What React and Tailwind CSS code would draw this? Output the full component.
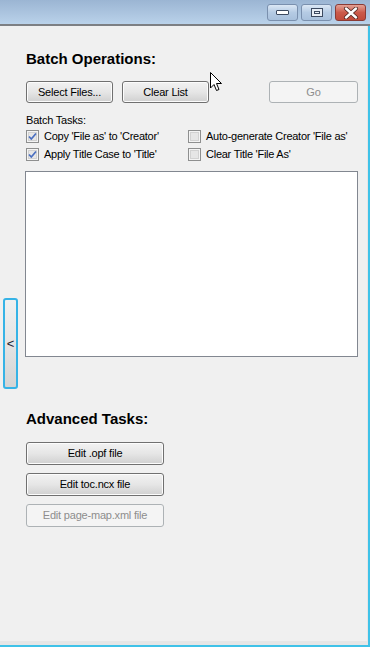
const font = { fontFamily: '"Liberation Sans", Arial, sans-serif' };

const WinButton = ({ children, disabled, className = "" }) => (
  <button
    className={`h-[22px] rounded-[3px] border text-[11px] tracking-[-0.2px] ${
      disabled
        ? "border-[#adb2b5] bg-[#f4f4f4] text-[#8d8d8d]"
        : "border-[#707070] bg-gradient-to-b from-[#f2f2f2] via-[#e6e6e6] to-[#d0d0d0] text-black shadow-[inset_0_0_0_1px_#fcfcfc]"
    } ${className}`}
  >
    {children}
  </button>
);

const CheckBox = ({ checked, label }) => (
  <div className="flex h-[18px] items-center gap-[5px]">
    <svg width="13" height="13" viewBox="0 0 13 13">
      <rect x="0.5" y="0.5" width="12" height="12" fill="#f4f4f4" stroke="#8e8f8f" />
      <rect x="2.5" y="2.5" width="8" height="8" fill="#e6e6e6" stroke="#d2d2d2" />
      {checked && (
        <path d="M3 6.5 L5.3 9 L10 3.5" fill="none" stroke="#4a6fc0" strokeWidth="1.7" />
      )}
    </svg>
    <span className="text-[11px] leading-[13px] tracking-[-0.25px]">{label}</span>
  </div>
);

const TitleButton = ({ children, close }) => (
  <div
    className={`flex h-[17px] w-[31px] items-center justify-center rounded-[3px] border ${
      close
        ? "border-[#8a3b35] bg-gradient-to-b from-[#e3a196] via-[#cb5a4a] to-[#c14a3a]"
        : "border-[#7a90ae] bg-gradient-to-b from-[#dce8f5] via-[#b5cbe4] to-[#a8c0dc]"
    }`}
  >
    {children}
  </div>
);

export default function App() {
  return (
    <div className="relative flex h-[648px] w-[370px] flex-col bg-white pb-px text-black" style={font}>
      {/* title bar */}
      <div className="flex h-[26px] shrink-0 items-start justify-end gap-[3px] border-b-2 border-[#7d7f83] bg-gradient-to-b from-[#9bb5d3] to-[#bad2ea] pr-[4px] pt-[4px]">
        <TitleButton>
          <div className="h-[5px] w-[13px] rounded-[1px] border border-[#3c4a60] bg-white" />
        </TitleButton>
        <TitleButton>
          <div className="flex h-[9px] w-[12px] items-center justify-center border border-[#3c4a60] bg-[#e8eef6]">
            <div className="h-[3px] w-[6px] border border-[#3c4a60]" />
          </div>
        </TitleButton>
        <TitleButton close>
          <svg width="16" height="12" viewBox="0 0 16 12">
            <path d="M3 1.5 L13 10.5 M13 1.5 L3 10.5" stroke="#4b2420" strokeWidth="4" strokeLinecap="round" />
            <path d="M3 1.5 L13 10.5 M13 1.5 L3 10.5" stroke="#ffffff" strokeWidth="2.4" strokeLinecap="round" />
          </svg>
        </TitleButton>
      </div>

      {/* body */}
      <div className="flex flex-1 border-b-2 border-r-2 border-[#3fc2e8]">
        <div className="flex flex-1 border-b-[4px] border-r border-[#e6e6e6] bg-[#f0f0f0]">
          <div className="w-[26px] shrink-0">
            <div className="ml-[3px] mt-[272px] flex h-[91px] w-[15px] items-center justify-center rounded-[3px] border-2 border-[#36b3e6] bg-gradient-to-b from-[#f0f0f0] via-[#e4e4e4] to-[#d4d4d4] text-[13px] text-[#1a1a2e]">
              &lt;
            </div>
          </div>

          <div className="flex w-[332px] flex-col pt-[24px]">
            <div className="text-[15px] font-bold leading-[18px]">Batch Operations:</div>

            <div className="mt-[13px] flex">
              <WinButton className="w-[87px]">Select Files...</WinButton>
              <WinButton className="ml-[9px] w-[87px]">Clear List</WinButton>
              <WinButton disabled className="ml-auto w-[89px]">Go</WinButton>
            </div>

            <div className="mt-[11px] text-[11px] leading-[13px] tracking-[-0.2px]">Batch Tasks:</div>
            <div className="grid grid-cols-[162px_1fr]">
              <CheckBox checked label="Copy 'File as' to 'Creator'" />
              <CheckBox label="Auto-generate Creator 'File as'" />
              <CheckBox checked label="Apply Title Case to 'Title'" />
              <CheckBox label="Clear Title 'File As'" />
            </div>

            <div className="-ml-px mt-[8px] h-[186px] w-[333px] border border-[#828790] bg-white" />

            <div className="mt-[53px] text-[15px] font-bold leading-[18px]">Advanced Tasks:</div>

            <div className="mt-[14px] flex w-[138px] flex-col gap-[8px]">
              <WinButton className="h-[23px]">Edit .opf file</WinButton>
              <WinButton className="h-[23px]">Edit toc.ncx file</WinButton>
              <WinButton disabled className="h-[23px]">Edit page-map.xml file</WinButton>
            </div>
          </div>
        </div>
      </div>

      {/* mouse pointer over the window */}
      <svg className="absolute left-[210px] top-[72px]" width="13" height="20" viewBox="0 0 13 20">
        <path d="M0.5 0.5 L0.5 16 L4 12.5 L6.5 18.5 L9 17.5 L6.5 11.5 L11.5 11.5 Z" fill="#ffffff" stroke="#000000" strokeWidth="1" strokeLinejoin="round" />
      </svg>
    </div>
  );
}
